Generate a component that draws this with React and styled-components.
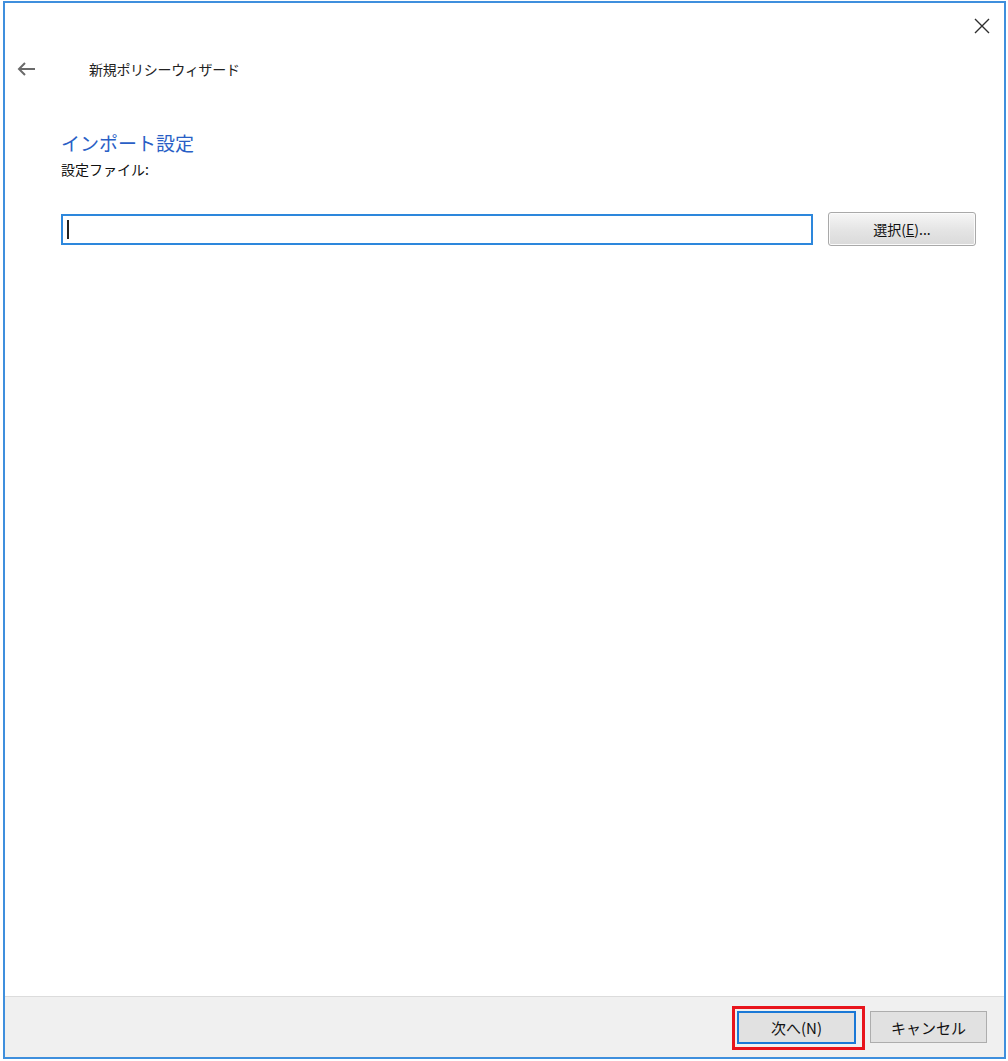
import React from "react";
import styled, { createGlobalStyle } from "styled-components";

const Global = createGlobalStyle`
  html, body { margin: 0; padding: 0; background: #ffffff; }
  body { font-family: "Noto Sans CJK JP", "Noto Sans", sans-serif; color: #1a1a1a; }
  * { box-sizing: border-box; }
`;

const Window = styled.div`
  margin: 1px 0 0 3px;
  width: 1003px;
  height: 1058px;
  border: 2px solid #3f8fdd;
  background: #fff;
  display: flex;
  flex-direction: column;
`;

const TopBar = styled.div`
  height: 45px;
  display: flex;
  justify-content: flex-end;
  align-items: center;
  padding-right: 11px;
`;

const CloseBtn = styled.button`
  width: 22px;
  height: 22px;
  border: 0;
  background: transparent;
  padding: 0;
  display: flex;
  align-items: center;
  justify-content: center;
`;

const NavRow = styled.div`
  height: 42px;
  display: flex;
  align-items: center;
  padding-left: 11px;
`;

const BackBtn = styled.button`
  width: 20px;
  height: 20px;
  border: 0;
  background: transparent;
  padding: 0;
  display: flex;
  align-items: center;
  justify-content: center;
`;

const WizardTitle = styled.div`
  margin-left: 53px;
  font-size: 14px;
  font-weight: 400;
  color: #222;
  letter-spacing: -0.3px;
`;

const Content = styled.div`
  flex: 1;
  padding: 39px 0 0 56px;
  display: flex;
  flex-direction: column;
`;

const Heading = styled.h1`
  margin: 0;
  font-size: 19px;
  font-weight: 400;
  line-height: 28px;
  color: #2a5fc6;
`;

const Label = styled.div`
  margin-top: 2px;
  font-size: 14px;
  font-weight: 400;
  line-height: 20px;
  color: #111;
`;

const FileRow = styled.div`
  margin-top: 33px;
  display: flex;
  align-items: center;
  gap: 15px;
`;

const FileInput = styled.div`
  width: 752px;
  height: 31px;
  border: 2px solid #2d87dc;
  background: #fff;
  display: flex;
  align-items: center;
  padding-left: 4px;
`;

const Caret = styled.span`
  width: 2px;
  height: 19px;
  background: #222;
`;

const BrowseBtn = styled.button`
  width: 148px;
  height: 34px;
  border: 1px solid #a9a9a9;
  border-radius: 3px;
  background: linear-gradient(#f6f6f6, #e4e4e4 55%, #dadada);
  font-family: "Noto Sans CJK JP", sans-serif;
  font-size: 14px;
  font-weight: 400;
  color: #111;
  padding: 0;
  box-shadow: inset 0 0 0 1px #fbfbfb;
`;

const Footer = styled.div`
  height: 61px;
  border-top: 1px solid #dcdcdc;
  background: #f0f0f0;
  display: flex;
  justify-content: flex-end;
  align-items: center;
  gap: 14px;
  padding-right: 17px;
`;

const Highlight = styled.div`
  position: relative;
  display: flex;
  &::after {
    content: "";
    position: absolute;
    left: -5px;
    top: -5px;
    right: -9px;
    bottom: -6px;
    border: 3.5px solid #e8141c;
    pointer-events: none;
  }
`;

const FooterBtn = styled.button`
  height: ${(p) => (p.$primary ? "33px" : "32px")};
  width: ${(p) => p.$w}px;
  border: ${(p) => (p.$primary ? "2px solid #1a78d6" : "1px solid #adadad")};
  background: #e1e1e1;
  font-family: "Noto Sans CJK JP", sans-serif;
  font-size: 15px;
  font-weight: 400;
  color: #111;
  padding: 0;
`;

export default function App() {
  return (
    <>
      <Global />
      <Window>
        <TopBar>
          <CloseBtn aria-label="閉じる">
            <svg width="16" height="16" viewBox="0 0 16 16">
              <path d="M1 1 L15 15 M15 1 L1 15" stroke="#2e2e2e" strokeWidth="1.4" />
            </svg>
          </CloseBtn>
        </TopBar>
        <NavRow>
          <BackBtn aria-label="戻る">
            <svg width="19" height="14" viewBox="0 0 19 14">
              <path d="M18 7 H2 M8 1 L2 7 L8 13" stroke="#6a6a6a" strokeWidth="2" fill="none" />
            </svg>
          </BackBtn>
          <WizardTitle>新規ポリシーウィザード</WizardTitle>
        </NavRow>
        <Content>
          <Heading>インポート設定</Heading>
          <Label>設定ファイル:</Label>
          <FileRow>
            <FileInput>
              <Caret />
            </FileInput>
            <BrowseBtn>選択(<u>E</u>)...</BrowseBtn>
          </FileRow>
        </Content>
        <Footer>
          <Highlight>
            <FooterBtn $primary $w={119}>次へ(N)</FooterBtn>
          </Highlight>
          <FooterBtn $w={117}>キャンセル</FooterBtn>
        </Footer>
      </Window>
    </>
  );
}
